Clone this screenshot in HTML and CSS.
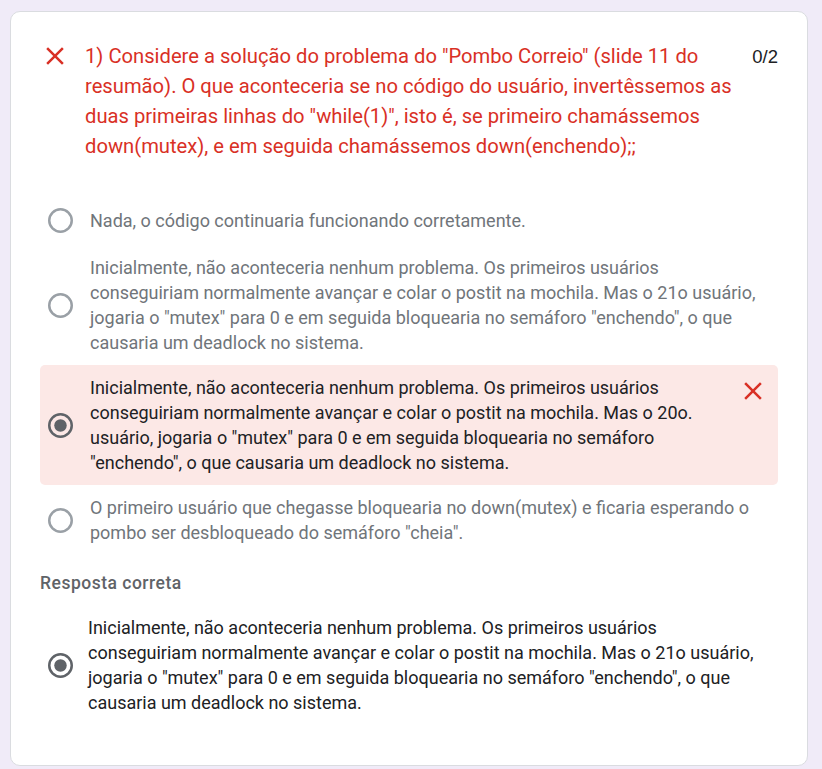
FILE: index.html
```html
<!DOCTYPE html>
<html lang="pt">
<head>
<meta charset="utf-8">
<link rel="stylesheet" href="styles.css">
</head>
<body>
<div class="card">
  <div class="q-head">
    <span class="icon-box">
      <svg class="x-icon" viewBox="0 0 24 24" width="30" height="30"><path d="M19 6.41L17.59 5 12 10.59 6.41 5 5 6.41 10.59 12 5 17.59 6.41 19 12 13.41 17.59 19 19 17.59 13.41 12z"/></svg>
    </span>
    <div class="q-title">1) Considere a solução do problema do "Pombo Correio" (slide 11 do resumão). O que aconteceria se no código do usuário, invertêssemos as duas primeiras linhas do "while(1)", isto é, se primeiro chamássemos down(mutex), e em seguida chamássemos down(enchendo);;</div>
    <div class="score">0/2</div>
  </div>

  <div class="options">
    <div class="opt">
      <span class="radio"><svg viewBox="0 0 25 25" width="25" height="25"><circle cx="12.5" cy="12.5" r="11.25" class="ring-off"/></svg></span>
      <span class="opt-text">Nada, o código continuaria funcionando corretamente.</span>
    </div>
    <div class="opt">
      <span class="radio"><svg viewBox="0 0 25 25" width="25" height="25"><circle cx="12.5" cy="12.5" r="11.25" class="ring-off"/></svg></span>
      <span class="opt-text">Inicialmente, não aconteceria nenhum problema. Os primeiros usuários conseguiriam normalmente avançar e colar o postit na mochila. Mas o 21o usuário, jogaria o "mutex" para 0 e em seguida bloquearia no semáforo "enchendo", o que causaria um deadlock no sistema.</span>
    </div>
    <div class="opt opt-wrong">
      <span class="radio"><svg viewBox="0 0 25 25" width="25" height="25"><circle cx="12.5" cy="12.5" r="11.25" class="ring-on"/><circle cx="12.5" cy="12.5" r="6.25" class="dot"/></svg></span>
      <span class="opt-text">Inicialmente, não aconteceria nenhum problema. Os primeiros usuários conseguiriam normalmente avançar e colar o postit na mochila. Mas o 20o. usuário, jogaria o "mutex" para 0 e em seguida bloquearia no semáforo "enchendo", o que causaria um deadlock no sistema.</span>
      <span class="icon-box opt-icon">
        <svg class="x-icon" viewBox="0 0 24 24" width="30" height="30"><path d="M19 6.41L17.59 5 12 10.59 6.41 5 5 6.41 10.59 12 5 17.59 6.41 19 12 13.41 17.59 19 19 17.59 13.41 12z"/></svg>
      </span>
    </div>
    <div class="opt">
      <span class="radio"><svg viewBox="0 0 25 25" width="25" height="25"><circle cx="12.5" cy="12.5" r="11.25" class="ring-off"/></svg></span>
      <span class="opt-text">O primeiro usuário que chegasse bloquearia no down(mutex) e ficaria esperando o pombo ser desbloqueado do semáforo "cheia".</span>
    </div>
  </div>

  <div class="correct">
    <div class="correct-label">Resposta correta</div>
    <div class="opt opt-correct">
      <span class="radio"><svg viewBox="0 0 25 25" width="25" height="25"><circle cx="12.5" cy="12.5" r="11.25" class="ring-on"/><circle cx="12.5" cy="12.5" r="6.25" class="dot"/></svg></span>
      <span class="opt-text">Inicialmente, não aconteceria nenhum problema. Os primeiros usuários conseguiriam normalmente avançar e colar o postit na mochila. Mas o 21o usuário, jogaria o "mutex" para 0 e em seguida bloquearia no semáforo "enchendo", o que causaria um deadlock no sistema.</span>
    </div>
  </div>
</div>
</body>
</html>
```

FILE: styles.css
```css
* { box-sizing: border-box; }

html, body {
  margin: 0;
  padding: 0;
  background: #f0ebf8;
  font-family: Roboto, "Liberation Sans", Arial, sans-serif;
}

.card {
  margin: 11px 0 0 10px;
  width: 798px;
  height: 755px;
  background: #fff;
  border: 1px solid #dadce0;
  border-radius: 10px;
  padding: 29px 29px 0 29px;
}

.q-head {
  display: flex;
  align-items: flex-start;
}

.icon-box {
  flex: 0 0 30px;
  width: 30px;
  height: 30px;
  display: flex;
  align-items: center;
  justify-content: center;
}

.x-icon { display: block; fill: #d93025; }

.q-title {
  flex: 1;
  margin-left: 15px;
  font-size: 20.2px;
  line-height: 30px;
  color: #d93025;
}

.score {
  margin-left: 8px;
  font-family: "Liberation Sans", Arial, sans-serif;
  font-size: 18.5px;
  line-height: 32px;
  color: #202124;
}

.options {
  margin-top: 34px;
}

.opt {
  display: flex;
  align-items: center;
  padding: 10px 10px 10px 8px;
  border-radius: 5px;
  min-height: 50px;
}

.radio {
  flex: 0 0 25px;
  width: 25px;
  height: 25px;
}

.radio svg { display: block; }

.ring-off { fill: none; stroke: #9aa0a6; stroke-width: 2.5; }
.ring-on { fill: none; stroke: #5f6368; stroke-width: 2.5; }
.dot { fill: #5f6368; }

.opt-text {
  flex: 1;
  margin-left: 17px;
  font-size: 18px;
  line-height: 25px;
  color: #70757a;
}

.opt-wrong {
  background: #fce8e6;
}

.opt-wrong .opt-text,
.opt-correct .opt-text {
  color: #202124;
}

.opt-icon {
  align-self: flex-start;
  margin-left: 10px;
  margin-top: 1px;
}

.correct {
  margin-top: 16px;
}

.correct-label {
  font-size: 17.5px;
  line-height: 25px;
  font-weight: 500;
  letter-spacing: 0.5px;
  color: #5f6368;
}

.opt-correct {
  margin-top: 9px;
  padding-left: 8px;
}

.opt-correct .opt-text {
  margin-left: 15px;
}
```
